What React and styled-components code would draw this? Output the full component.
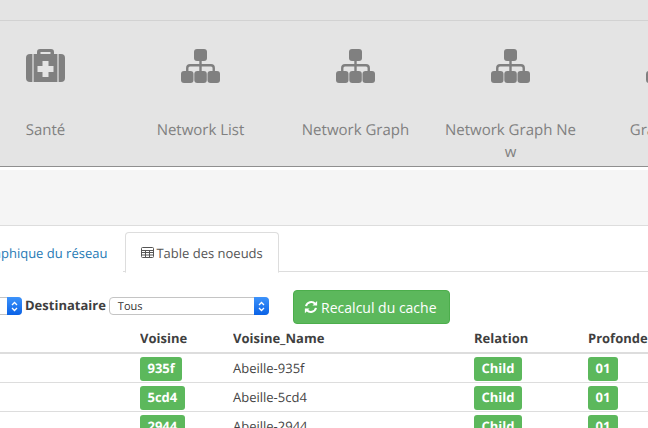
import React from "react";
import styled, { createGlobalStyle } from "styled-components";

const Global = createGlobalStyle`
  html, body { margin: 0; padding: 0; background: #fff; overflow: hidden; }
  body {
    width: 648px;
    height: 428px;
    font-family: "Open Sans", "Liberation Sans", sans-serif;
    font-size: 13px;
    color: #555;
    text-rendering: geometricPrecision;
  }
`;

const Page = styled.div`
  width: 648px;
  height: 428px;
  overflow: hidden;
`;

const TopStrip = styled.div`
  height: 20px;
  background: #e4e4e4;
  border-bottom: 1px solid #d2d2d2;
`;

const Menu = styled.nav`
  display: flex;
  height: 145px;
  background: #e4e4e4;
  border-bottom: 1px solid #8f8f8f;
  margin-bottom: 3px;
  overflow: hidden;
`;

const MenuTrack = styled.div`
  display: flex;
  gap: 20px;
  margin-left: -22px;
  flex: none;
`;

const MenuItem = styled.a`
  width: 135px;
  flex: none;
  padding-top: 28px;
  text-align: center;
  color: #808080;
  font-size: 15px;
  line-height: 22px;
  word-break: break-all;
  svg { display: block; margin: 0 auto 36px; }
`;

const Band = styled.div`
  height: 55px;
  background: #f5f5f5;
  border-bottom: 1px solid #ddd;
`;

const TabBar = styled.ul`
  display: flex;
  list-style: none;
  margin: 6px 0 0;
  padding: 0;
  height: 39px;
  border-bottom: 1px solid #ddd;
`;

const Tab = styled.li`
  margin-right: 2px;
  margin-left: ${(p) => p.$offset || 0}px;
  margin-bottom: -1px;
  height: 39px;
  padding: 0 15px;
  display: flex;
  align-items: center;
  gap: 2px;
  flex: none;
  line-height: 20px;
  font-size: 13px;
  color: ${(p) => (p.$active ? "#555" : "#1f7ab5")};
  background: #fff;
  border: 1px solid ${(p) => (p.$active ? "#ddd" : "transparent")};
  border-bottom-color: ${(p) => (p.$active ? "#fff" : "transparent")};
  border-radius: 4px 4px 0 0;
`;

const Filters = styled.div`
  display: flex;
  align-items: flex-start;
  margin-top: 18px;
  height: 34px;
`;

const SelectBox = styled.div`
  width: ${(p) => p.$width}px;
  height: 18px;
  margin-top: 7px;
  margin-left: ${(p) => p.$left || 0}px;
  flex: none;
  display: flex;
  justify-content: space-between;
  box-sizing: border-box;
  border: 1px solid #c4c4c4;
  border-radius: 4px;
  background: #fff;
  font-size: 11px;
  line-height: 17px;
  color: #333;
  padding-left: 8px;
`;

const SelectArrow = styled.span`
  width: 15px;
  height: 18px;
  margin: -1px -1px 0 0;
  border-radius: 0 4px 4px 0;
  background: linear-gradient(#3d93fb, #0a62e6);
  display: flex;
  align-items: center;
  justify-content: center;
`;

const FilterLabel = styled.label`
  font-weight: 700;
  font-size: 13px;
  color: #3f3f3f;
  line-height: 18px;
  margin: 6px 3px 0 3px;
  flex: none;
`;

const GreenButton = styled.button`
  margin-left: 24px;
  width: 157px;
  height: 34px;
  flex: none;
  border: 1px solid #4cae4c;
  border-radius: 4px;
  background: #5cb85c;
  color: #fff;
  font-family: inherit;
  font-size: 14px;
  padding: 0 2px 0 0;
  display: flex;
  align-items: center;
  justify-content: center;
  gap: 3px;
`;

const Table = styled.table`
  table-layout: fixed;
  border-collapse: collapse;
  width: 800px;
  font-size: 13px;
  color: #444;
`;

const Head = styled.th`
  text-align: left;
  font-weight: 700;
  height: 28px;
  padding: 0;
  color: #3f3f3f;
  border-bottom: 2px solid #ddd;
  width: ${(p) => p.$width}px;
  white-space: nowrap;
  overflow: hidden;
`;

const Cell = styled.td`
  height: 29px;
  padding: ${(p) => (p.$text ? "0" : "2px 0 0")};
  box-sizing: border-box;
  border-bottom: 1px solid #ddd;
`;

const Badge = styled.span`
  display: block;
  width: fit-content;
  height: 24px;
  line-height: 23px;
  padding: 0 7.500px;
  border-radius: 3px;
  background: #5cb85c;
  color: #fff;
  font-weight: 700;
  font-size: 13px;
`;

const SitemapIcon = () => (
  <svg width="39" height="34" viewBox="0 0 39 34" fill="#808080">
    <rect x="13" y="0" width="13" height="12" rx="3" />
    <rect x="0" y="22" width="12.500" height="12" rx="3" />
    <rect x="13.300" y="22" width="12.500" height="12" rx="3" />
    <rect x="26.500" y="22" width="12.500" height="12" rx="3" />
    <path
      d="M19.500 12V22M6.250 23V19Q6.250 16.200 9 16.200H30Q32.750 16.200 32.750 19V23"
      fill="none"
      stroke="#808080"
      strokeWidth="2.400"
    />
  </svg>
);

const MedkitIcon = () => (
  <svg width="39" height="34" viewBox="0 0 39 34" fill="#808080">
    <path d="M11 5V3q0-3 3-3h11q3 0 3 3v2h-3.500V3h-10v2z" />
    <path d="M4 5h2.400v28H4q-4 0-4-4V9q0-4 4-4z" />
    <path d="M35 5h-2.400v28H35q4 0 4-4V9q0-4-4-4z" />
    <path
      fillRule="evenodd"
      d="M7.600 5h23.800v28H7.600zM16.500 12v5h-5v6h5v5h6v-5h5v-6h-5v-5z"
    />
  </svg>
);

const TableIcon = () => (
  <svg width="13" height="11" viewBox="0 0 13 11" fill="none" stroke="#555" strokeWidth="1">
    <rect x="0.500" y="0.500" width="12" height="10" rx="1" />
    <path d="M0 3.500h13M0 5.500h13M0 8h13M4.500 3v8M8.500 3v8" />
  </svg>
);

const RefreshIcon = () => (
  <svg width="14" height="14" viewBox="0 0 24 24" fill="none" stroke="#fff" strokeWidth="3.500">
    <path d="M3.500 10.500A9 9 0 0 1 19 6.500" />
    <path d="M20.500 13.500A9 9 0 0 1 5 17.500" />
    <path d="M22.500 1.500v8h-8z" fill="#fff" stroke="none" />
    <path d="M1.500 22.500v-8h8z" fill="#fff" stroke="none" />
  </svg>
);

const UpDown = () => (
  <svg width="7" height="11" viewBox="0 0 7 11" fill="none" stroke="#fff" strokeWidth="1.300">
    <path d="M1 4l2.500-2.500L6 4M1 7l2.500 2.500L6 7" />
  </svg>
);

const menu = [
  { label: "Santé", icon: <MedkitIcon /> },
  { label: "Network List", icon: <SitemapIcon /> },
  { label: "Network Graph", icon: <SitemapIcon /> },
  { label: "Network Graph New", icon: <SitemapIcon /> },
  { label: "Graph LQI", icon: <SitemapIcon /> },
];

const rows = [
  { id: "935f", name: "Abeille-935f" },
  { id: "5cd4", name: "Abeille-5cd4" },
  { id: "2944", name: "Abeille-2944" },
];

export default function App() {
  return (
    <Page>
      <Global />
      <TopStrip />
      <Menu>
        <MenuTrack>
          {menu.map((item) => (
            <MenuItem key={item.label}>
              {item.icon}
              {item.label}
            </MenuItem>
          ))}
        </MenuTrack>
      </Menu>
      <Band />
      <TabBar>
        <Tab $offset={-37}>Graphique du réseau</Tab>
        <Tab $active>
          <TableIcon />
          Table des noeuds
        </Tab>
      </TabBar>
      <Filters>
        <SelectBox $width={40} $left={-18}>
          <span />
          <SelectArrow>
            <UpDown />
          </SelectArrow>
        </SelectBox>
        <FilterLabel>Destinataire</FilterLabel>
        <SelectBox $width={160}>
          Tous
          <SelectArrow>
            <UpDown />
          </SelectArrow>
        </SelectBox>
        <GreenButton>
          <RefreshIcon />
          Recalcul du cache
        </GreenButton>
      </Filters>
      <Table>
        <thead>
          <tr>
            <Head $width={140} />
            <Head $width={93}>Voisine</Head>
            <Head $width={241}>Voisine_Name</Head>
            <Head $width={114}>Relation</Head>
            <Head $width={212}>Profondeur</Head>
          </tr>
        </thead>
        <tbody>
          {rows.map((row) => (
            <tr key={row.id}>
              <Cell />
              <Cell>
                <Badge>{row.id}</Badge>
              </Cell>
              <Cell $text>{row.name}</Cell>
              <Cell>
                <Badge>Child</Badge>
              </Cell>
              <Cell>
                <Badge>01</Badge>
              </Cell>
            </tr>
          ))}
        </tbody>
      </Table>
    </Page>
  );
}
